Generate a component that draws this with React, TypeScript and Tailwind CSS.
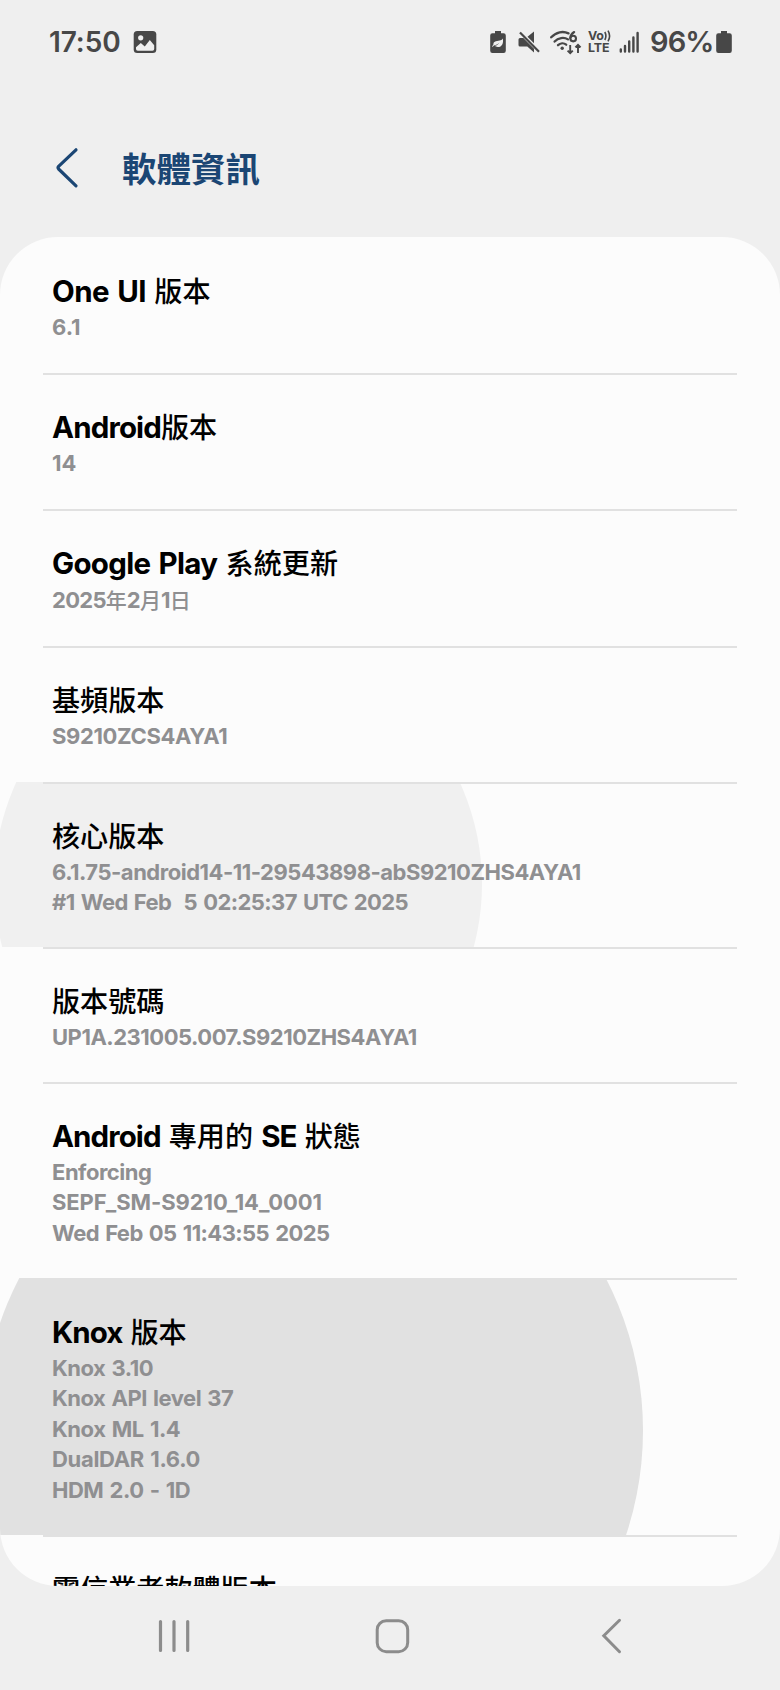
import { clsx } from "clsx";

type Ripple = { cx: number; cy: number; r: number; color: string };

type InfoRow = {
  title: string;
  lines: { text: string; tracking?: string }[];
  height: string;
  titleTracking?: string;
  ripple?: Ripple;
};

const rows: InfoRow[] = [
  {
    title: "One UI 版本",
    titleTracking: "tracking-[-0.6px]",
    lines: [{ text: "6.1" }],
    height: "h-[136px]",
  },
  {
    title: "Android版本",
    titleTracking: "tracking-[-0.85px]",
    lines: [{ text: "14" }],
    height: "h-[136px]",
  },
  {
    title: "Google Play 系統更新",
    titleTracking: "tracking-[-0.7px]",
    lines: [{ text: "2025年2月1日", tracking: "tracking-[-0.7px]" }],
    height: "h-[137px]",
  },
  {
    title: "基頻版本",
    lines: [{ text: "S9210ZCS4AYA1", tracking: "tracking-[-0.37px]" }],
    height: "h-[136px]",
  },
  {
    title: "核心版本",
    lines: [
      { text: "6.1.75-android14-11-29543898-abS9210ZHS4AYA1", tracking: "tracking-[-0.48px]" },
      { text: "#1 Wed Feb  5 02:25:37 UTC 2025", tracking: "tracking-[-0.58px]" },
    ],
    height: "h-[165px]",
    ripple: { cx: 237.5, cy: 102, r: 244, color: "#f0f0f0" },
  },
  {
    title: "版本號碼",
    lines: [{ text: "UP1A.231005.007.S9210ZHS4AYA1", tracking: "tracking-[-0.48px]" }],
    height: "h-[135px]",
  },
  {
    title: "Android 專用的 SE 狀態",
    titleTracking: "tracking-[-0.9px]",
    lines: [
      { text: "Enforcing", tracking: "tracking-[-0.48px]" },
      { text: "SEPF_SM-S9210_14_0001", tracking: "tracking-[-0.08px]" },
      { text: "Wed Feb 05 11:43:55 2025", tracking: "tracking-[-0.57px]" },
    ],
    height: "h-[196px]",
  },
  {
    title: "Knox 版本",
    titleTracking: "tracking-[-0.95px]",
    lines: [
      { text: "Knox 3.10", tracking: "tracking-[-0.5px]" },
      { text: "Knox API level 37", tracking: "tracking-[-0.5px]" },
      { text: "Knox ML 1.4", tracking: "tracking-[-0.47px]" },
      { text: "DualDAR 1.6.0", tracking: "tracking-[-0.32px]" },
      { text: "HDM 2.0 - 1D", tracking: "tracking-[-0.48px]" },
    ],
    height: "h-[257px]",
    ripple: { cx: 312.5, cy: 152, r: 330.5, color: "#e1e1e1" },
  },
  { title: "電信業者軟體版本", lines: [], height: "h-[136px]" },
];

// Han characters are set slightly smaller and lighter than the Latin ones
function MixedText({ text, hanClass }: { text: string; hanClass: string }) {
  return (
    <>
      {text.split(/([\u4e00-\u9fff]+)/).map((part, i) =>
        i % 2 ? (
          <span key={i} className={hanClass}>
            {part}
          </span>
        ) : (
          part
        )
      )}
    </>
  );
}

function StatusBar() {
  return (
    <header className="flex h-[84px] items-center justify-between pl-[49px] pr-[48px] text-[#474747]">
      <div className="flex items-center">
        <span className="w-[84px] text-[28px] font-semibold leading-6 tracking-[-0.1px]">17:50</span>
        <svg width="24" height="24" viewBox="0 0 24 24">
          <rect x="0.7" y="1" width="22.6" height="22" rx="3.5" fill="currentColor" />
          <circle cx="7.7" cy="7.8" r="2.6" fill="#efefef" />
          <path d="M3 17.2 7.8 13l4 3.4 5-6.4 4.4 5.2V19a1.8 1.8 0 0 1-1.8 1.8H4.8A1.8 1.8 0 0 1 3 19Z" fill="#efefef" />
        </svg>
      </div>

      <div className="flex items-center">
        <svg width="16" height="24" viewBox="0 0 16 24" className="mr-[12px]">
          <path d="M5 1h6v2.3h2.6A2.2 2.2 0 0 1 15.8 5.5v15.3a2.2 2.2 0 0 1-2.2 2.2H2.4a2.2 2.2 0 0 1-2.2-2.2V5.5a2.2 2.2 0 0 1 2.2-2.2H5Z" fill="currentColor" />
          <path d="M12.8 8.4c.9 4.6-.6 8.6-5 8.6-1.3 0-2.3-.5-2.9-1.2 1.9-.5 3.5-1.7 4.6-3.4-1.8 1.7-3.3 2.6-5.6 3-.6.4-.9 1-1.2 1.7l-.5-.5c.2-.8.6-1.5 1.2-2-.3-3.8 4.7-3.6 7.2-4.3.9-.3 1.700-.9 2.200-1.900Z" fill="#efefef" />
        </svg>
        <svg width="22" height="24" viewBox="0 0 22 24" className="mr-[10px]">
          <path d="M.5 9.5A1.5 1.5 0 0 1 2 8h3.300L16 18.700v3.700l-6.700-5.900H2A1.500 1.500 0 0 1 .5 15Z" fill="currentColor" />
          <path d="M9.5 6.7 16 1.500v11.800Z" fill="currentColor" />
          <path d="M2 2.5 21 21.700" stroke="currentColor" strokeWidth="2.2" />
        </svg>
        <svg width="32" height="25" viewBox="0 0 32 25" className="mr-[6px]" fill="none" stroke="currentColor" strokeLinecap="round">
          <path d="M1.2 7.3C6 2 13 .7 18.5 3.4" strokeWidth="2.3" />
          <path d="M4.6 11.6c3.6-4 9.400-4.800 13.400-2.200" strokeWidth="2.3" />
          <path d="M8 15.2c2.400-2.300 5.800-2.500 8.200-.5" strokeWidth="2.3" />
          <circle cx="12.2" cy="18.3" r="1.7" fill="currentColor" stroke="none" />
          <path d="M24.2 2c-2.400 1.400-3.800 3.500-4 6" strokeWidth="2.1" />
          <circle cx="23.2" cy="8.6" r="2.8" strokeWidth="2.1" />
          <path d="M20.2 15v8M17.6 20.6l2.6 2.6 2.6-2.6M28 23v-8M25.4 17.4l2.6-2.6 2.6 2.6" strokeWidth="1.9" strokeLinecap="butt" />
        </svg>
        <div className="mr-[7px] flex h-[24px] w-[24px] flex-col text-[12.4px] font-bold leading-[12px]">
          <div className="flex h-[12px] items-center">
            <span className="w-[16px] tracking-[-0.3px]">Vo</span>
            <svg width="7" height="12" viewBox="0 0 7 12" fill="none" stroke="currentColor" strokeWidth="1.6">
              <path d="M.8 2q2.2 4 0 8M4 .6q3.2 5.4 0 10.8" />
            </svg>
          </div>
          <span className="h-[12px] tracking-[-0.1px]">LTE</span>
        </div>
        <svg width="21" height="24" viewBox="0 0 21 24" className="mr-[10px]" stroke="currentColor" strokeWidth="2.4" strokeLinecap="round">
          <path d="M1.8 19.5v2M6 16v5.5M10.2 11.5v10M14.4 7.5v14M18.6 3v18.5" />
        </svg>
        <span className="w-[66px] text-[29px] font-semibold leading-6 tracking-[-0.9px]">96%</span>
        <svg width="16" height="24" viewBox="0 0 16 24">
          <path d="M5 1h6v2.3h2.6A2.2 2.2 0 0 1 15.8 5.5v15.3a2.2 2.2 0 0 1-2.2 2.2H2.4a2.2 2.2 0 0 1-2.2-2.2V5.5a2.2 2.2 0 0 1 2.2-2.2H5Z" fill="currentColor" />
        </svg>
      </div>
    </header>
  );
}

function TitleBar() {
  return (
    <div className="flex h-[153px] items-start pl-[55px] pt-[63px] text-[#1b4674]">
      <svg width="24" height="42" viewBox="0 0 24 42" fill="none" stroke="currentColor" strokeWidth="3.2" strokeLinecap="round" strokeLinejoin="round">
        <path d="M21 2.8 3.6 19.4a2 2 0 0 0 0 2.6L21 38.8" />
      </svg>
      <h1 className="ml-[43px] mt-[2px] text-[34.5px] font-bold leading-[42px]">軟體資訊</h1>
    </div>
  );
}

function Row({ row, first }: { row: InfoRow; first: boolean }) {
  const hasHan = row.lines.some((line) => /[\u4e00-\u9fff]/.test(line.text));

  return (
    <li className={clsx("relative shrink-0 overflow-hidden", row.height)}>
      {row.ripple && (
        <span
          className="absolute rounded-full"
          style={{
            left: row.ripple.cx - row.ripple.r,
            top: row.ripple.cy - row.ripple.r,
            width: row.ripple.r * 2,
            height: row.ripple.r * 2,
            background: row.ripple.color,
          }}
        />
      )}
      <div className={clsx("relative mx-[43px] h-0.5", !first && "bg-[#e1e1e1]")} />
      <div className="relative pl-[52px] pt-[33px]">
        <h2
          className={clsx(
            "h-[40px] whitespace-pre text-[29.5px] font-bold leading-[39px] text-black [word-spacing:2px]",
            row.titleTracking
          )}
        >
          <MixedText text={row.title} hanClass="text-[28.1px] font-medium tracking-normal" />
        </h2>
        {row.lines.map((line) => (
          <p
            key={line.text}
            className={clsx(
              "h-[30.4px] whitespace-pre text-[22px] font-bold text-[#8f8f91] [word-spacing:1.5px]",
              hasHan ? "leading-[33px]" : "leading-[30.4px]",
              line.tracking
            )}
          >
            <MixedText text={line.text} hanClass="text-[21px] font-medium tracking-normal" />
          </p>
        ))}
      </div>
    </li>
  );
}

function NavBar() {
  return (
    <nav className="flex h-[104px] items-start pl-[158px] pt-[32px] text-[#8c8c8c]">
      <svg width="32" height="36" viewBox="0 0 32 36" stroke="currentColor" strokeWidth="3.2" strokeLinecap="round">
        <path d="M2.5 3.5v29M16 3.5v29M29.7 3.5v29" />
      </svg>
      <svg width="36" height="36" viewBox="0 0 36 36" className="ml-[184px]" fill="none" stroke="currentColor" strokeWidth="3">
        <rect x="3.2" y="2.7" width="30.5" height="31" rx="9" />
      </svg>
      <svg width="22" height="36" viewBox="0 0 22 36" className="ml-[191px]" fill="none" stroke="currentColor" strokeWidth="3" strokeLinecap="round">
        <path d="M18.5 2.3 2.8 17.8 18.5 33.7" />
      </svg>
    </nav>
  );
}

export default function App() {
  return (
    <div
      lang="zh-Hant"
      className="flex h-[1690px] w-[780px] flex-col overflow-hidden bg-[#efefef] font-['Inter','Noto_Sans_CJK_TC',sans-serif]"
    >
      <StatusBar />
      <TitleBar />
      <ul className="flex h-[1349px] flex-col overflow-hidden rounded-[58px] bg-[#fcfcfc]">
        {rows.map((row, i) => (
          <Row key={row.title} row={row} first={i === 0} />
        ))}
      </ul>
      <NavBar />
    </div>
  );
}
